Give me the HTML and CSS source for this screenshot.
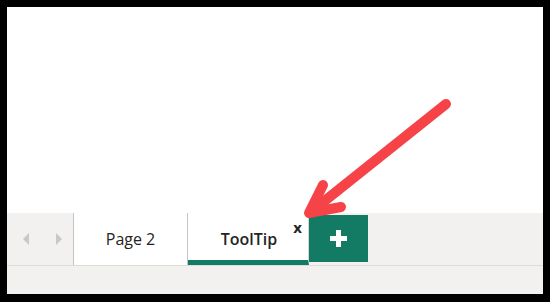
FILE: index.html
```html
<!DOCTYPE html>
<html lang="en">
<head>
  <meta charset="UTF-8">
  <title>Tabs</title>
  <link rel="stylesheet" href="styles.css">
</head>
<body>
  <div class="frame">
    <div class="canvas">
      <svg class="pointer" width="550" height="302" viewBox="0 0 550 302">
        <g stroke="#f64348" stroke-width="10" stroke-linecap="round" stroke-linejoin="round" fill="none">
          <line x1="446" y1="104" x2="312" y2="211"/>
          <polyline points="323,185 309,213 341,207"/>
        </g>
      </svg>
    </div>

    <div class="tabbar">
      <div class="nav">
        <span class="arrow left"></span>
        <span class="arrow right"></span>
      </div>
      <div class="tab">Page 2</div>
      <div class="tab active">
        ToolTip
        <span class="close">x</span>
      </div>
      <button class="add">
        <span class="plus"></span>
      </button>
    </div>

    <div class="footer"></div>
  </div>
</body>
</html>
```

FILE: styles.css
```css
html, body {
  margin: 0;
  height: 100%;
  background: #000;
}

body {
  font-family: "Open Sans", "Noto Sans", sans-serif;
}

.frame {
  box-sizing: border-box;
  height: 302px;
  border-style: solid;
  border-color: #000;
  border-width: 7px 7px 8px 7px;
  display: flex;
  flex-direction: column;
  background: #f2f1ef;
}

.canvas {
  height: 206px;
  background: #fff;
}

.pointer {
  position: absolute;
  left: 0;
  top: 0;
  z-index: 2;
}

.tabbar {
  height: 52px;
  display: flex;
  align-items: stretch;
  background: #f2f1ef;
  border-bottom: 1px solid #dcdcda;
}

.nav {
  width: 66px;
  display: flex;
  align-items: center;
  border-right: 1px solid #c4c4c4;
}

.arrow {
  width: 0;
  height: 0;
  border-top: 6px solid transparent;
  border-bottom: 6px solid transparent;
}

.arrow.left {
  margin-left: 16px;
  border-right: 6px solid #c6c8cc;
}

.arrow.right {
  margin-left: 27px;
  border-left: 6px solid #c6c8cc;
}

.tab {
  position: relative;
  box-sizing: border-box;
  width: 114px;
  display: flex;
  align-items: center;
  justify-content: center;
  background: #fff;
  border-right: 1px solid #c4c4c4;
  font-size: 16px;
  color: #252423;
}

.tab.active {
  width: 121px;
  font-weight: 600;
  border-bottom: 5px solid #137a63;
  padding-top: 5px;
  padding-left: 2px;
  border-right-color: #d6d6d6;
}

.close {
  position: absolute;
  right: 6px;
  top: 4px;
  font-size: 15px;
  font-weight: bold;
  color: #252423;
}

.add {
  width: 59px;
  margin: 2px 0 3px 0;
  border: none;
  padding: 0;
  background: #137a63;
  display: flex;
  align-items: center;
  justify-content: center;
  cursor: pointer;
}

.plus {
  position: relative;
  width: 17px;
  height: 17px;
}

.plus::before,
.plus::after {
  content: "";
  position: absolute;
  background: #fff;
}

.plus::before {
  left: 0;
  top: 6px;
  width: 17px;
  height: 5px;
}

.plus::after {
  left: 6px;
  top: 0;
  width: 5px;
  height: 17px;
}

.footer {
  flex: 1;
  background: #f2f1ef;
}
```
